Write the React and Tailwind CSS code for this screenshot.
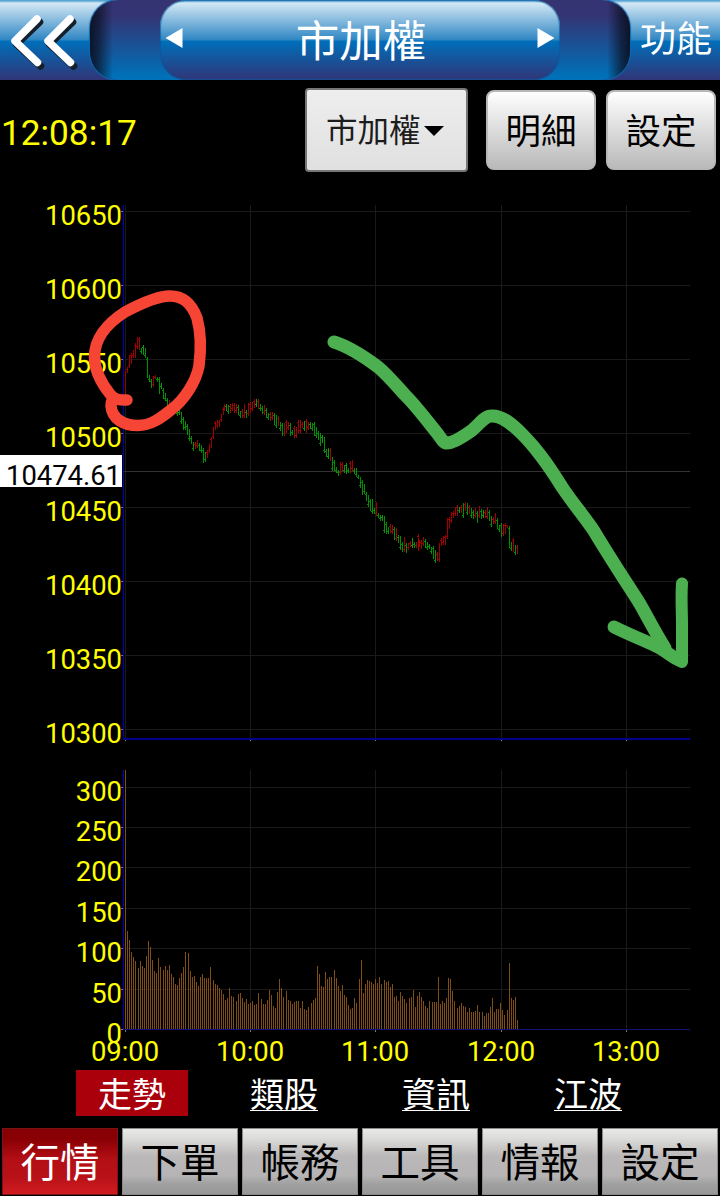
const bottomNav = ['行情', '下單', '帳務', '工具', '情報', '設定']
const tabs = ['走勢', '類股', '資訊', '江波']

const priceTicks = [10650, 10600, 10550, 10500, 10450, 10400, 10350, 10300]
const volumeTicks = [300, 250, 200, 150, 100, 50, 0]
const timeTicks = ['09:00', '10:00', '11:00', '12:00', '13:00']
const timeX = [125, 250, 375, 501, 626]

const priceY = (i) => 211 + i * 74
const volumeY = (v) => Math.round(1029 - v * 0.808)

// [high, low] of every minute, from 09:00
const candles = [
  [371, 398], [367, 372], [355, 367], [353, 363], [350, 357], [343, 357], [337, 348], [337, 349],
  [348, 353], [345, 354], [348, 357], [357, 377], [375, 381], [379, 387], [376, 386], [375, 378],
  [377, 381], [377, 393], [383, 388], [388, 398], [393, 400], [398, 408], [400, 407], [402, 409],
  [404, 410], [406, 412], [407, 415], [410, 414], [412, 423], [417, 429], [421, 429], [424, 434],
  [429, 440], [436, 443], [442, 450], [442, 448], [440, 447], [443, 450], [445, 452], [448, 462],
  [452, 461], [450, 457], [444, 452], [437, 447], [427, 438], [421, 429], [420, 427], [420, 426],
  [414, 421], [407, 414], [404, 410], [404, 410], [405, 413], [404, 412], [403, 410], [403, 412],
  [404, 412], [405, 414], [411, 417], [409, 417], [404, 417], [410, 417], [403, 415], [402, 412],
  [402, 410], [399, 407], [399, 406], [399, 408], [404, 410], [406, 413], [405, 414], [408, 417],
  [413, 419], [412, 420], [412, 419], [413, 424], [415, 427], [416, 425], [422, 430], [423, 435],
  [423, 435], [420, 432], [422, 429], [423, 435], [430, 434], [426, 437], [427, 437], [420, 432],
  [420, 432], [422, 427], [421, 430], [419, 432], [422, 429], [422, 428], [423, 430], [422, 435],
  [427, 437], [431, 439], [433, 445], [435, 442], [437, 452], [449, 456], [448, 458], [448, 460],
  [457, 470], [460, 470], [467, 472], [470, 475], [462, 474], [462, 470], [465, 472], [463, 473],
  [468, 472], [461, 472], [460, 470], [468, 473], [468, 476], [475, 478], [477, 487], [480, 494],
  [484, 493], [492, 500], [495, 506], [499, 510], [499, 513], [508, 513], [502, 515], [513, 517],
  [515, 520], [515, 520], [516, 532], [522, 533], [527, 533], [524, 532], [525, 533], [527, 539],
  [528, 540], [535, 542], [536, 549], [542, 551], [537, 551], [543, 552], [543, 549], [541, 546],
  [538, 547], [542, 547], [542, 547], [534, 550], [540, 546], [540, 548], [537, 545], [539, 547],
  [542, 549], [544, 548], [547, 553], [546, 558], [550, 562], [552, 560], [543, 561], [538, 545],
  [536, 544], [535, 544], [518, 538], [517, 528], [512, 522], [511, 517], [507, 515], [505, 515],
  [507, 512], [505, 512], [503, 517], [502, 510], [503, 514], [505, 513], [508, 517], [510, 518],
  [508, 517], [511, 522], [506, 517], [509, 518], [510, 517], [510, 517], [507, 518], [510, 520],
  [516, 526], [517, 523], [513, 523], [518, 528], [525, 531], [523, 536], [524, 535], [523, 533],
  [525, 527], [526, 547], [542, 550], [538, 551], [545, 554], [545, 553],
]

// candle index -> x, the samples sit two pixels apart
const lastX = 517
const candleX = (i) => Math.round(125 + (i * (lastX - 125)) / (candles.length - 1))

const candleColor = (i) => {
  if (i === 0) return '#a00000'
  const [h, l] = candles[i]
  const [ph, pl] = candles[i - 1]
  const d = h + l - ph - pl
  if (Math.abs(d) < 3) return i % 3 === 0 ? '#0a9a0a' : '#9a0a0a'
  return d > 0 ? '#009000' : '#a00000'
}

// top of every volume bar
const volumes = [
  770, 931, 940, 952, 957, 961, 968, 961, 966, 968, 956, 941, 947, 960, 971, 973, 958, 967, 970, 966,
  970, 965, 974, 977, 984, 985, 978, 973, 967, 952, 953, 971, 977, 976, 982, 986, 977, 974, 978, 978,
  978, 967, 980, 984, 985, 988, 990, 994, 1000, 998, 988, 996, 997, 1001, 994, 993, 998, 1002, 999, 1004,
  1003, 1001, 1005, 1004, 993, 999, 1004, 1004, 1000, 990, 995, 1006, 1008, 992, 979, 988, 997, 991, 1000,
  1001, 1004, 1002, 1001, 1001, 1008, 1001, 1009, 1010, 1007, 1003, 1000, 998, 966, 974, 986, 987, 972,
  979, 977, 977, 970, 978, 986, 991, 985, 995, 997, 1005, 1009, 1008, 998, 1003, 979, 960, 993, 984, 980,
  981, 982, 984, 979, 983, 977, 984, 980, 982, 981, 987, 984, 997, 996, 1001, 992, 996, 999, 1003, 998,
  997, 990, 1007, 996, 992, 997, 1001, 1006, 1008, 1001, 1002, 1002, 1002, 977, 1004, 1001, 1003, 998,
  978, 979, 991, 1001, 1008, 1006, 1003, 1006, 1007, 1012, 1008, 1012, 1012, 1011, 1005, 1012, 1012, 1016,
  1013, 1013, 1007, 998, 1012, 1009, 1009, 1003, 1010, 1015, 1010, 963, 998, 1000, 997, 1020,
]

const volumeX = (i) => Math.round(125 + (i * (lastX - 125)) / (volumes.length - 1))

const Arrow = ({ flip }) => (
  <svg width="20" height="24" viewBox="0 0 20 24" className={flip ? 'rotate-180' : ''}>
    <path d="M0.5 12 L17.5 2 V22 Z" fill="#fff" />
  </svg>
)

const Header = () => (
  <header className="flex h-20 overflow-hidden bg-[linear-gradient(to_bottom,#4f9fd0_0,#62abd8_1px,#d3e8f5_3px,#2f86c3_40px,#006fba_41px,#303577_80px)]">
    <div className="w-[90px] shrink-0">
      <svg width="90" height="80" viewBox="0 0 90 80" fill="none" strokeWidth="7.5" strokeLinecap="round" strokeLinejoin="round">
        <g stroke="#14202c" transform="translate(1.5 3)">
          <path d="M38 19 L15 41 L39 63" />
          <path d="M71 19 L48 41 L72 63" />
        </g>
        <g stroke="#fff">
          <path d="M37 19 L15 41 L37.5 62.5" />
          <path d="M70 19 L48 41 L70.5 62.5" />
        </g>
      </svg>
    </div>
    <div className="w-[540px] shrink-0 overflow-hidden rounded-[28px] bg-[linear-gradient(to_bottom,#343473_0,#343473_15px,#0070b8_76px)] shadow-[0_0_1px_1px_#0b6bb0]">
      <div className="h-20 bg-[linear-gradient(to_right,rgba(10,14,30,0.9)_0,rgba(10,14,30,0.65)_9px,transparent_23px,transparent_517px,rgba(10,14,30,0.65)_531px,rgba(10,14,30,0.9)_540px)] px-[70px]">
        <div className="flex h-20 items-center justify-between rounded-[26px] bg-[linear-gradient(to_bottom,#4f9fd0_0,#62abd8_1px,#d3e8f5_3px,#2f86c3_40px,#006fba_41px,#303577_80px)] px-[5px] shadow-[inset_0_0_1px_1px_rgba(7,90,160,0.7)]">
          <div className="pb-1"><Arrow /></div>
          <h1 className="pt-1.5 pl-0.5 text-[43.5px] leading-[80px] text-white">市加權</h1>
          <div className="pb-1"><Arrow flip /></div>
        </div>
      </div>
    </div>
    <button className="h-20 w-[90px] shrink-0 pl-2.5 text-left text-[36px] leading-[80px] whitespace-nowrap text-white">功能</button>
  </header>
)

const Toolbar = () => (
  <div className="flex h-[100px] items-start pt-2">
    <div className="w-[305px] pt-0.5 pl-px text-[35.2px] leading-[86px] text-[#ffff00]">12:08:17</div>
    <div className="flex h-[84px] w-[163px] items-center rounded-sm border-2 border-[#777] bg-linear-to-b from-[#eee] to-[#e0e0e0] pl-[19px] text-[31.5px] text-[#1c1c1c]">
      <span className="pt-1">市加權</span>
      <svg width="20" height="10" viewBox="0 0 20 10" className="mt-0.5 ml-[3px]">
        <path d="M0 0 H20 L10 10 Z" fill="#000" />
      </svg>
    </div>
    {['明細', '設定'].map((label, i) => (
      <button
        key={label}
        className={`${i === 0 ? 'ml-[18px]' : 'ml-2.5'} mt-0.5 h-20 w-[110px] rounded-lg border-2 border-[#b8b8b8] bg-linear-to-b from-white to-[#bababa] pt-1.5 text-[35.5px] text-black`}
      >
        {label}
      </button>
    ))}
  </div>
)

const Chart = () => (
  <svg width="720" height="890" viewBox="0 180 720 890" className="block" shapeRendering="crispEdges">
    {/* Price grid */}
    {priceTicks.map((p, i) => (
      <g key={p}>
        <rect x="125" y={priceY(i)} width="565" height="1" fill="#1a1a1a" />
        <rect x="121" y={priceY(i)} width="2" height="1" fill="#777" />
      </g>
    ))}
    {timeX.map((x) => (
      <g key={x}>
        <rect x={x} y="205" width="1" height="533" fill="#1a1a1a" />
        <rect x={x} y="740" width="1" height="1" fill="#777" />
      </g>
    ))}
    <rect x="124" y="471" width="566" height="1" fill="#333" />
    <rect x="123" y="205" width="1" height="535" fill="#0000c8" />
    <rect x="123" y="738" width="567" height="2" fill="#00008b" />

    {candles.map(([h, l], i) => (
      <g key={i} fill={candleColor(i)}>
        <rect x={candleX(i)} y={h} width="1" height={l - h + 1} />
        <rect x={candleX(i) - 1} y={i % 2 ? h + 2 : l - 2} width="2" height="1" />
      </g>
    ))}

    {/* Volume grid */}
    {volumeTicks.map((v) => (
      <g key={v}>
        <rect x="125" y={volumeY(v)} width="565" height="1" fill="#1a1a1a" />
        <rect x="121" y={volumeY(v)} width="2" height="1" fill="#777" />
      </g>
    ))}
    {timeX.map((x) => (
      <g key={x}>
        <rect x={x} y="770" width="1" height="259" fill="#1a1a1a" />
        <rect x={x} y="1030" width="1" height="2" fill="#777" />
      </g>
    ))}
    {volumes.map((top, i) => (
      <rect key={i} x={volumeX(i)} y={top} width="1" height={1029 - top} fill="#804d14" />
    ))}
    <rect x="123" y="770" width="1" height="260" fill="#0000c8" />
    <rect x="123" y="1029" width="567" height="1" fill="#12127a" />

    {/* Labels */}
    <g fill="#ffff00" fontSize="27.4" textAnchor="end">
      {priceTicks.map((p, i) => (
        <text key={p} x="122" y={priceY(i) + 14.4}>{p}</text>
      ))}
      {volumeTicks.map((v) => (
        <text key={v} x="122" y={volumeY(v) + 14}>{v}</text>
      ))}
    </g>
    <g fill="#ffff00" fontSize="27.4" textAnchor="middle">
      {timeTicks.map((t, i) => (
        <text key={t} x={timeX[i]} y="1060.5">{t}</text>
      ))}
    </g>
    <rect x="0" y="455" width="122" height="32" fill="#fff" />
    <text x="121" y="485" fontSize="27.4" textAnchor="end" fill="#000">10474.61</text>

    {/* Hand-drawn marks */}
    <g fill="none" strokeLinecap="round" strokeLinejoin="round" shapeRendering="auto">
      <path
        stroke="#f64435"
        strokeWidth="11.5"
        d="M127 400 C120 400 114 400 110 394 C102 384 94.5 372 94.5 357 C94.5 340 106 324 125 312 C140 304 158 296 170 296 C182 296 191 302 197 318 C200.5 331 201 350 199 366 C196 382 184 400 172 409 C160 419 150 425.5 138 425.5 C124 425.5 112 419 111 406 C111 402 112 400 113 398"
      />
      <path
        stroke="#4caf50"
        strokeWidth="13"
        d="M334 342 C350 347 370 361 378 367 C389 376 400 390 406 396 C416 406 429 423 437 433 C441 438 443 443 447 443 C454 443 464 436 471 431 C478 426 484 416 491 416 C502 415 513 425 522 434 C540 452 552 471 562 487 C574 505 584 516 594 531 C610 558 630 588 640 604 C648 618 656 634 665 648"
      />
      <path stroke="#4caf50" strokeWidth="13" d="M614 627 C628 634 643 640 656 646 C666 651 673 658 681 661" />
      <path stroke="#4caf50" strokeWidth="12" d="M682 583.5 C681 598 682 612 682 625 C682 639 682 652 682 662" />
    </g>
  </svg>
)

const Tabs = () => (
  <nav className="flex h-[46px] px-14">
    {tabs.map((tab, i) => (
      <div key={tab} className="flex w-[152px] justify-center">
        {i === 0 ? (
          <span className="h-[46px] w-28 bg-[#a9000c] pt-0.5 text-center text-[34px] leading-[46px] text-white">{tab}</span>
        ) : (
          <span className="pt-0.5 text-[34px] leading-[46px] text-white underline decoration-1 underline-offset-[3px] [text-decoration-skip-ink:none]">{tab}</span>
        )}
      </div>
    ))}
  </nav>
)

const BottomNav = () => (
  <nav className="mt-3 flex gap-1 px-0.5">
    {bottomNav.map((item, i) => (
      <button
        key={item}
        className={
          i === 0
            ? 'h-[67px] w-[116px] border border-[#7a1515] bg-[linear-gradient(to_bottom,#860003_0,#8a0004_16%,#b50f16_48%,#b81218_75%,#d01c20_100%)] pt-0.5 text-[39.5px] leading-[65px] text-white'
            : 'h-[67px] w-[116px] border border-[#8a8a8a] bg-[linear-gradient(to_bottom,#e8e8e6_0,#dcdcda_14%,#bab8b8_42%,#b5b3b3_72%,#a0a0a0_85%,#979797_100%)] pt-0.5 text-[39.5px] leading-[65px] text-black'
        }
      >
        {item}
      </button>
    ))}
  </nav>
)

const App = () => (
  <div className="h-[1196px] w-[720px] overflow-hidden bg-black font-[Roboto,'Noto_Sans_CJK_TC',sans-serif]">
    <Header />
    <Toolbar />
    <Chart />
    <Tabs />
    <BottomNav />
  </div>
)

export default App
